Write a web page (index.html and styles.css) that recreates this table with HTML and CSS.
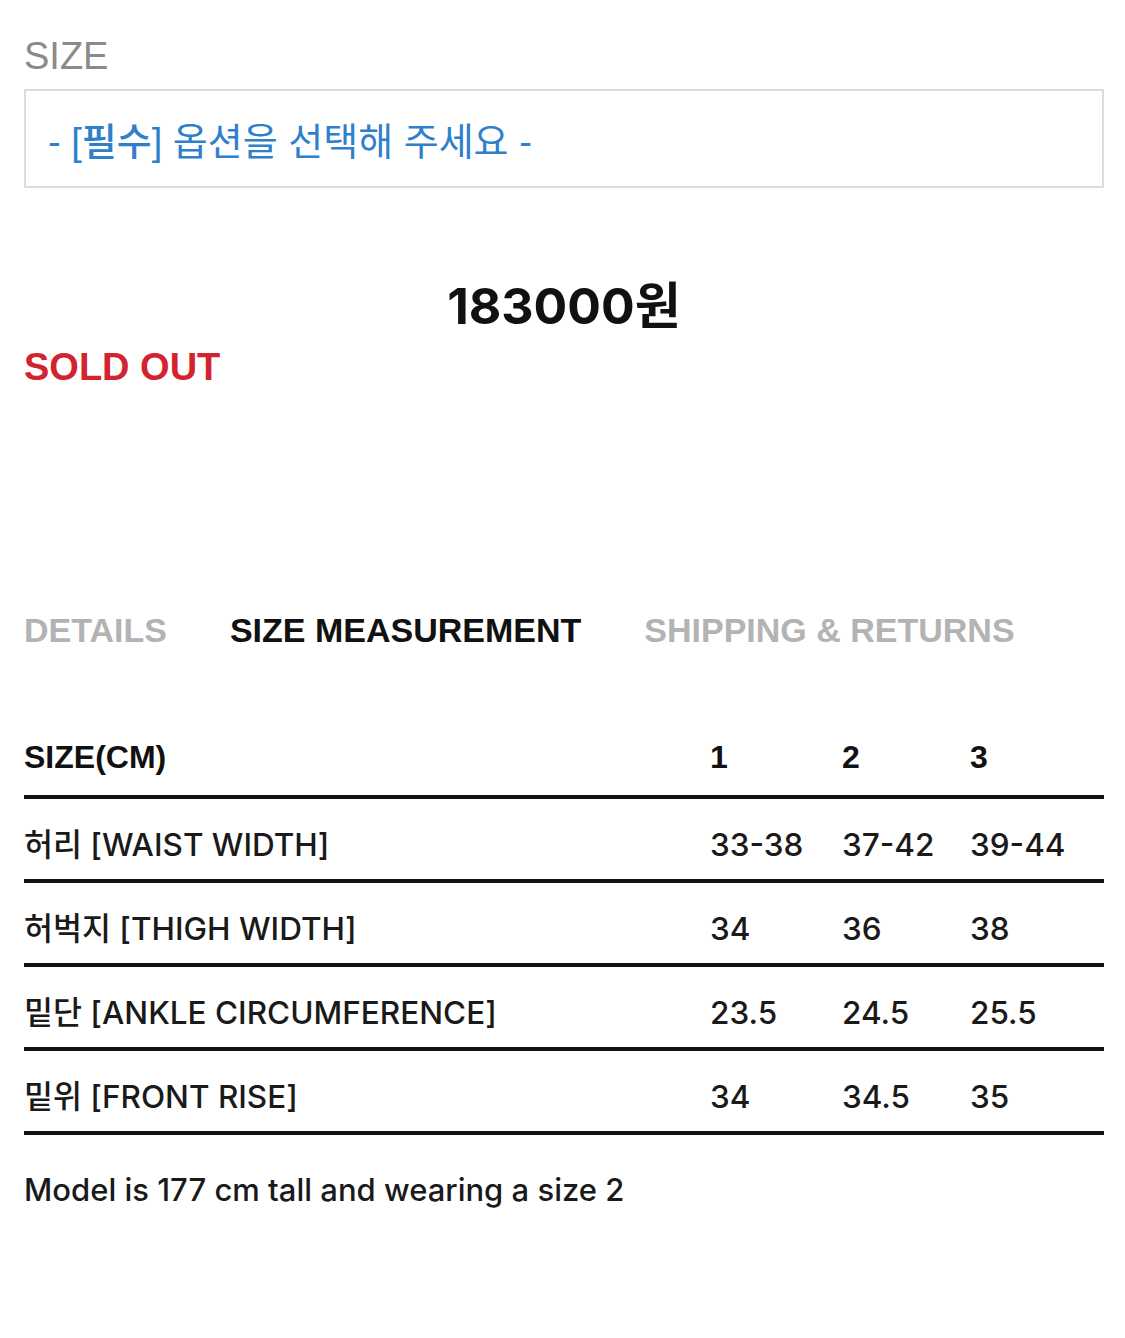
FILE: index.html
```html
<!DOCTYPE html>
<html lang="ko">
<head>
<meta charset="utf-8">
<title>Size</title>
<link rel="stylesheet" href="styles.css">
</head>
<body>
<div class="page">
  <div class="opt-label">SIZE</div>
  <div class="select"><span class="select-text">- <b class="req">[필수]</b> 옵션을 선택해 주세요 -</span></div>

  <div class="price">183000원</div>
  <div class="soldout">SOLD OUT</div>

  <nav class="tabs">
    <span class="tab">DETAILS</span>
    <span class="tab active">SIZE MEASUREMENT</span>
    <span class="tab">SHIPPING &amp; RETURNS</span>
  </nav>

  <div class="table">
    <div class="row head">
      <span class="label">SIZE(CM)</span><span>1</span><span>2</span><span>3</span>
    </div>
    <div class="row">
      <span class="label">허리 [WAIST WIDTH]</span><span>33-38</span><span>37-42</span><span>39-44</span>
    </div>
    <div class="row">
      <span class="label">허벅지 [THIGH WIDTH]</span><span>34</span><span>36</span><span>38</span>
    </div>
    <div class="row">
      <span class="label">밑단 [ANKLE CIRCUMFERENCE]</span><span>23.5</span><span>24.5</span><span>25.5</span>
    </div>
    <div class="row">
      <span class="label">밑위 [FRONT RISE]</span><span>34</span><span>34.5</span><span>35</span>
    </div>
  </div>

  <p class="model">Model is 177 cm tall and wearing a size 2</p>
</div>
</body>
</html>
```

FILE: styles.css
```css
html, body {
  margin: 0;
  padding: 0;
  background: #fff;
}

.page {
  width: 1080px;
  margin-left: 24px;
  padding-top: 37px;
  font-family: "Liberation Sans", "Noto Sans CJK KR", Arial, sans-serif;
  color: #111;
}

.opt-label {
  font-size: 38px;
  line-height: 38px;
  color: #8a8a8a;
}

.select {
  margin-top: 14px;
  height: 95px;
  border: 2px solid #dcdcdc;
  display: flex;
  align-items: center;
  padding-left: 22px;
}

.select-text {
  font-size: 38px;
  color: #2e80cc;
  font-family: "Liberation Sans", "Noto Sans CJK KR", sans-serif;
}

.req {
  font-weight: 500;
}

.price {
  margin-top: 92px;
  text-align: center;
  font-family: Inter, "Noto Sans CJK KR", sans-serif;
  font-size: 50px;
  line-height: 52px;
  font-weight: 700;
  color: #111;
}

.soldout {
  margin-top: 16px;
  font-size: 38px;
  line-height: 38px;
  font-weight: 700;
  color: #d2232e;
}

.tabs {
  margin-top: 227px;
  display: flex;
  gap: 63px;
  font-size: 34px;
  line-height: 34px;
  font-weight: 700;
}

.tab {
  color: #b3b3b3;
}

.tab.active {
  color: #111;
}

.table {
  margin-top: 94px;
}

.row {
  display: grid;
  grid-template-columns: 686px 132px 128px 1fr;
  font-family: Inter, "Noto Sans CJK KR", sans-serif;
  font-weight: 500;
  font-size: 31.5px;
  line-height: 31px;
  padding: 30px 0 19px;
  border-bottom: 4px solid #111;
  color: #1a1a1a;
}

.row.head {
  font-family: "Liberation Sans", "Noto Sans CJK KR", sans-serif;
  font-size: 32px;
  line-height: 32px;
  font-weight: 700;
  padding: 0 0 22px;
  color: #111;
}

.model {
  margin: 36px 0 0;
  font-family: Inter, sans-serif;
  font-weight: 500;
  font-size: 31px;
  line-height: 38px;
  color: #1a1a1a;
}
```
